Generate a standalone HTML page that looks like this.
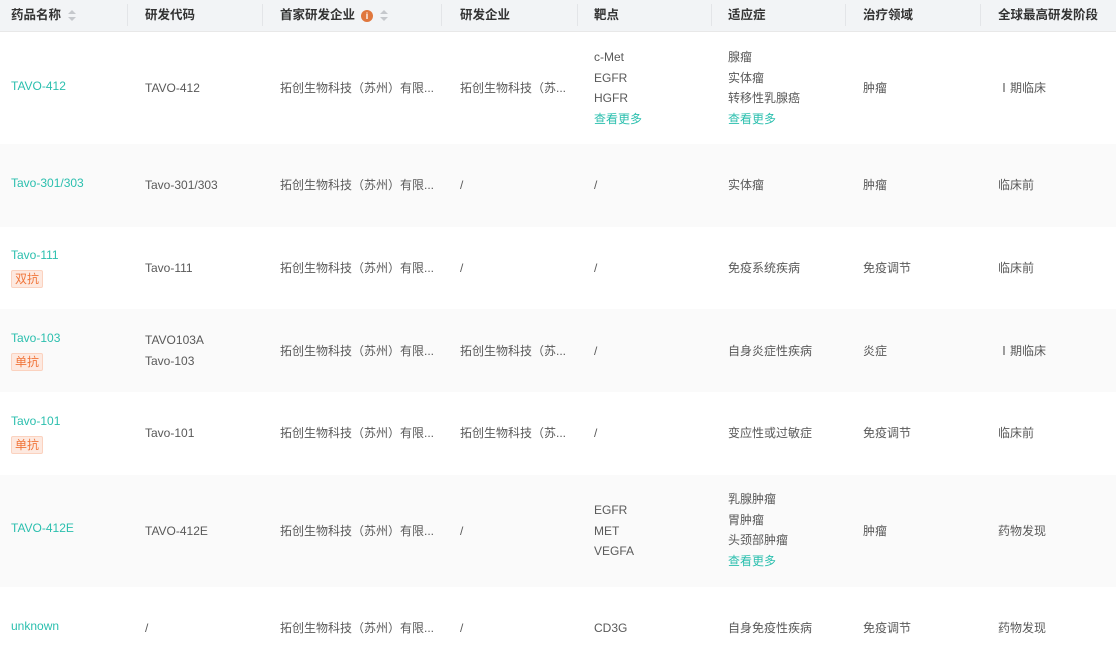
<!DOCTYPE html>
<html><head><meta charset="utf-8"><style>
body{margin:0;width:1116px;height:653px;overflow:hidden;background:#fff;font-family:"Liberation Sans","Noto Sans CJK SC",sans-serif;font-size:12px;color:#595959;position:relative}
.hd{position:absolute;left:0;top:0;width:1116px;height:31px;background:#f2f4f6;border-bottom:1px solid #e8e8e8;font-weight:bold;color:#333}
.hd span{position:absolute;top:4px;font-size:12.5px}
.sep{position:absolute;top:4px;width:1px;height:22px;background:#e3e5e8}
.row{position:absolute;left:0;width:1116px}
.c{position:absolute;line-height:20.5px;white-space:nowrap}
.t{color:#2bbfae}
.tag{display:inline-block;margin-top:4px;padding:0 3px;line-height:16px;background:#fde9e0;border:1px solid #fbd2bf;color:#f0753a;border-radius:2px}
.sort{display:inline-block;vertical-align:middle;margin-left:7px;width:8px;height:12px;position:relative}
.sort:before{content:"";position:absolute;top:0;left:0;border:4px solid transparent;border-bottom:4px solid #c5c8cc;border-top:0}
.sort:after{content:"";position:absolute;top:7px;left:0;border:4px solid transparent;border-top:4px solid #c5c8cc;border-bottom:0}
.info{display:inline-block;width:12px;height:12px;border-radius:50%;background:#e0773d;color:#fff;font-size:9px;font-style:normal;text-align:center;line-height:12px;vertical-align:middle;margin-left:6px}
</style></head><body>
<div class="hd">
<span style="left:11px">药品名称<i class="sort"></i></span>
<span style="left:145px">研发代码</span>
<span style="left:280px">首家研发企业<i class="info">i</i><i class="sort"></i></span>
<span style="left:460px">研发企业</span>
<span style="left:594px">靶点</span>
<span style="left:728px">适应症</span>
<span style="left:863px">治疗领域</span>
<span style="left:998px">全球最高研发阶段</span>
<i class="sep" style="left:127px"></i><i class="sep" style="left:262px"></i><i class="sep" style="left:441px"></i><i class="sep" style="left:577px"></i><i class="sep" style="left:711px"></i><i class="sep" style="left:845px"></i><i class="sep" style="left:980px"></i>
</div>

<div class="row" style="top:32px;height:112px;background:#fff">
<div class="c t" style="left:11px;top:44px">TAVO-412</div>
<div class="c" style="left:145px;top:46px">TAVO-412</div>
<div class="c" style="left:280px;top:46px">拓创生物科技（苏州）有限...</div>
<div class="c" style="left:460px;top:46px">拓创生物科技（苏...</div>
<div class="c" style="left:594px;top:15px">c-Met<br>EGFR<br>HGFR<br><span class="t">查看更多</span></div>
<div class="c" style="left:728px;top:15px">腺瘤<br>实体瘤<br>转移性乳腺癌<br><span class="t">查看更多</span></div>
<div class="c" style="left:863px;top:46px">肿瘤</div>
<div class="c" style="left:998px;top:46px">Ⅰ期临床</div>
</div>

<div class="row" style="top:144px;height:83px;background:#fafafa">
<div class="c t" style="left:11px;top:29px">Tavo-301/303</div>
<div class="c" style="left:145px;top:31px">Tavo-301/303</div>
<div class="c" style="left:280px;top:31px">拓创生物科技（苏州）有限...</div>
<div class="c" style="left:460px;top:31px">/</div>
<div class="c" style="left:594px;top:31px">/</div>
<div class="c" style="left:728px;top:31px">实体瘤</div>
<div class="c" style="left:863px;top:31px">肿瘤</div>
<div class="c" style="left:998px;top:31px">临床前</div>
</div>

<div class="row" style="top:227px;height:82px;background:#fff">
<div class="c" style="left:11px;top:18px"><span class="t">Tavo-111</span><br><span class="tag">双抗</span></div>
<div class="c" style="left:145px;top:31px">Tavo-111</div>
<div class="c" style="left:280px;top:31px">拓创生物科技（苏州）有限...</div>
<div class="c" style="left:460px;top:31px">/</div>
<div class="c" style="left:594px;top:31px">/</div>
<div class="c" style="left:728px;top:31px">免疫系统疾病</div>
<div class="c" style="left:863px;top:31px">免疫调节</div>
<div class="c" style="left:998px;top:31px">临床前</div>
</div>

<div class="row" style="top:309px;height:83px;background:#fafafa">
<div class="c" style="left:11px;top:19px"><span class="t">Tavo-103</span><br><span class="tag">单抗</span></div>
<div class="c" style="left:145px;top:21px">TAVO103A<br>Tavo-103</div>
<div class="c" style="left:280px;top:32px">拓创生物科技（苏州）有限...</div>
<div class="c" style="left:460px;top:32px">拓创生物科技（苏...</div>
<div class="c" style="left:594px;top:32px">/</div>
<div class="c" style="left:728px;top:32px">自身炎症性疾病</div>
<div class="c" style="left:863px;top:32px">炎症</div>
<div class="c" style="left:998px;top:32px">Ⅰ期临床</div>
</div>

<div class="row" style="top:392px;height:83px;background:#fff">
<div class="c" style="left:11px;top:19px"><span class="t">Tavo-101</span><br><span class="tag">单抗</span></div>
<div class="c" style="left:145px;top:31px">Tavo-101</div>
<div class="c" style="left:280px;top:31px">拓创生物科技（苏州）有限...</div>
<div class="c" style="left:460px;top:31px">拓创生物科技（苏...</div>
<div class="c" style="left:594px;top:31px">/</div>
<div class="c" style="left:728px;top:31px">变应性或过敏症</div>
<div class="c" style="left:863px;top:31px">免疫调节</div>
<div class="c" style="left:998px;top:31px">临床前</div>
</div>

<div class="row" style="top:475px;height:112px;background:#fafafa">
<div class="c t" style="left:11px;top:43px">TAVO-412E</div>
<div class="c" style="left:145px;top:46px">TAVO-412E</div>
<div class="c" style="left:280px;top:46px">拓创生物科技（苏州）有限...</div>
<div class="c" style="left:460px;top:46px">/</div>
<div class="c" style="left:594px;top:25px">EGFR<br>MET<br>VEGFA</div>
<div class="c" style="left:728px;top:14px">乳腺肿瘤<br>胃肿瘤<br>头颈部肿瘤<br><span class="t">查看更多</span></div>
<div class="c" style="left:863px;top:46px">肿瘤</div>
<div class="c" style="left:998px;top:46px">药物发现</div>
</div>

<div class="row" style="top:587px;height:66px;background:#fff">
<div class="c t" style="left:11px;top:29px">unknown</div>
<div class="c" style="left:145px;top:31px">/</div>
<div class="c" style="left:280px;top:31px">拓创生物科技（苏州）有限...</div>
<div class="c" style="left:460px;top:31px">/</div>
<div class="c" style="left:594px;top:31px">CD3G</div>
<div class="c" style="left:728px;top:31px">自身免疫性疾病</div>
<div class="c" style="left:863px;top:31px">免疫调节</div>
<div class="c" style="left:998px;top:31px">药物发现</div>
</div>
</body></html>
